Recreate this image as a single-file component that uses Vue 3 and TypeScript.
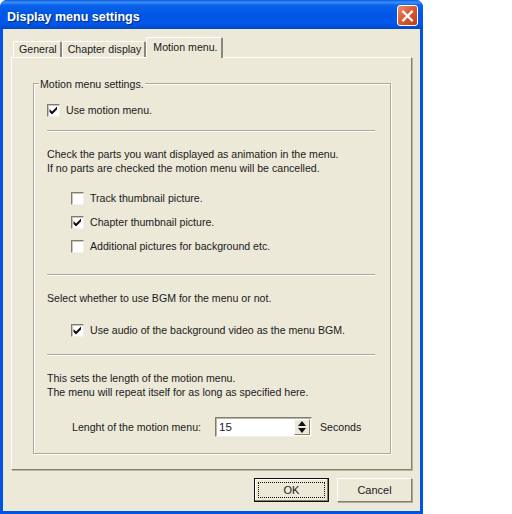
<template>
  <div class="window">
    <div class="title-bar">
      <span class="title">Display menu settings</span>
      <button class="close-btn" aria-label="Close">
        <svg viewBox="0 0 20 20" width="20" height="20">
          <path d="M5.5 5.5 L14.5 14.5 M14.5 5.5 L5.5 14.5" stroke="#fff" stroke-width="2.4" stroke-linecap="square" fill="none" />
        </svg>
      </button>
    </div>

    <div class="client">
      <div class="tabs">
        <div v-for="tab in tabs" :key="tab" :class="['tab', { active: tab === activeTab }]">{{ tab }}</div>
      </div>

      <div class="panel">
        <div class="group">
          <span class="legend">Motion menu settings.</span>

          <label class="check first">
            <input v-model="useMotion" type="checkbox" />
            <span class="box"><svg v-if="useMotion" viewBox="0 0 11 11" width="11" height="11"><path d="M1.5 4 L4 6.5 L9 1.5 L9 4.5 L4 9.5 L1.5 7 Z" fill="#111" /></svg></span>
            Use motion menu.
          </label>
          <div class="sep sep-a"></div>

          <p class="text text-a">Check the parts you want displayed as animation in the menu.<br />If no parts are checked the motion menu will be cancelled.</p>

          <div class="parts">
            <label v-for="part in parts" :key="part.label" class="check">
              <input v-model="part.on" type="checkbox" />
              <span class="box"><svg v-if="part.on" viewBox="0 0 11 11" width="11" height="11"><path d="M1.5 4 L4 6.5 L9 1.5 L9 4.5 L4 9.5 L1.5 7 Z" fill="#111" /></svg></span>
              {{ part.label }}
            </label>
          </div>
          <div class="sep sep-b"></div>

          <p class="text text-b">Select whether to use BGM for the menu or not.</p>
          <label class="check audio">
            <input v-model="useAudio" type="checkbox" />
            <span class="box"><svg v-if="useAudio" viewBox="0 0 11 11" width="11" height="11"><path d="M1.5 4 L4 6.5 L9 1.5 L9 4.5 L4 9.5 L1.5 7 Z" fill="#111" /></svg></span>
            Use audio of the background video as the menu BGM.
          </label>
          <div class="sep sep-c"></div>

          <p class="text text-c">This sets the length of the motion menu.<br />The menu will repeat itself for as long as specified here.</p>

          <div class="length-row">
            <span class="length-label">Lenght of the motion menu:</span>
            <div class="spin">
              <input v-model="seconds" class="spin-input" type="text" />
              <div class="spin-btns">
                <span class="arrow up"></span>
                <span class="arrow down"></span>
              </div>
            </div>
            <span class="unit">Seconds</span>
          </div>
        </div>
      </div>

      <div class="footer">
        <button class="btn default"><span class="focus">OK</span></button>
        <button class="btn">Cancel</button>
      </div>
    </div>
  </div>
</template>

<script setup lang="ts">
import { reactive, ref } from 'vue';

const tabs = ['General', 'Chapter display', 'Motion menu.'];
const activeTab = ref('Motion menu.');

const useMotion = ref(true);
const useAudio = ref(true);
const seconds = ref('15');

const parts = reactive([
  { label: 'Track thumbnail picture.', on: false },
  { label: 'Chapter thumbnail picture.', on: true },
  { label: 'Additional pictures for background etc.', on: false },
]);
</script>

<style>
body {
  background: #fff;
}
</style>

<style scoped>
.window {
  box-sizing: border-box;
  width: 423px;
  height: 514px;
  display: flex;
  flex-direction: column;
  background: #0054e3;
  border-radius: 7px 7px 0 0;
  padding: 0 3px 3px;
  font-family: "Liberation Sans", Arial, sans-serif;
  font-size: 10.6px;
  color: #1a1a1a;
}

.title-bar {
  box-sizing: border-box;
  height: 29px;
  margin: 0 -3px;
  padding: 2px 5px 0 7px;
  display: flex;
  align-items: center;
  justify-content: space-between;
  border-radius: 7px 7px 0 0;
  background: linear-gradient(180deg, #0a5be0 0%, #3d8ff5 8%, #0a63ea 18%, #0055e5 50%, #0059ec 80%, #0048c8 100%);
}

.title {
  margin-top: 2px;
  color: #fff;
  font-size: 12.5px;
  font-weight: 700;
  text-shadow: 1px 1px 1px #0a2a80;
}

.close-btn {
  box-sizing: border-box;
  width: 21px;
  height: 21px;
  padding: 0;
  border: 1px solid #fff;
  border-radius: 3px;
  background: linear-gradient(135deg, #e9906f 0%, #dc5a35 45%, #c23a1a 100%);
  display: flex;
  align-items: center;
  justify-content: center;
}

.client {
  flex: 1;
  background: #ece9d8;
  padding: 8px 8px 0;
  display: flex;
  flex-direction: column;
}

.tabs {
  display: flex;
  align-items: flex-end;
  height: 20px;
  padding-left: 2px;
  position: relative;
  z-index: 1;
}

.tab {
  box-sizing: border-box;
  height: 16px;
  line-height: 15px;
  padding: 0 3px 0 5px;
  border-top: 1px solid #fff;
  border-left: 1px solid #fff;
  border-right: 2px solid #8a887c;
  border-radius: 2px 2px 0 0;
  white-space: nowrap;
}

.tab.active {
  height: 21px;
  line-height: 18px;
  margin-bottom: -1px;
  padding: 0 3px 0 6px;
  background: #ece9d8;
}

.panel {
  box-sizing: border-box;
  height: 413px;
  padding: 25px 20px 0 21px;
  border: 1px solid;
  border-color: #fff #84826f #84826f #fff;
  box-shadow: 1px 1px 0 #b8b5a3;
}

.group {
  box-sizing: border-box;
  position: relative;
  height: 371px;
  padding: 0 15px 0 13px;
  border: 1px solid #aca899;
  box-shadow: inset 1px 1px 0 #fff, 1px 1px 0 #fff;
}

.legend {
  position: absolute;
  top: -6px;
  left: 5px;
  padding: 0 1px;
  line-height: 13px;
  background: #ece9d8;
}

.check {
  display: flex;
  align-items: center;
  height: 16px;
  white-space: nowrap;
}

.check input {
  display: none;
}

.box {
  box-sizing: border-box;
  width: 13px;
  height: 13px;
  margin-right: 6px;
  flex: none;
  display: flex;
  align-items: center;
  justify-content: center;
  background: #fff;
  border: 1px solid;
  border-color: #7f7d70 #f2f0e6 #f2f0e6 #7f7d70;
  box-shadow: inset 1px 1px 0 #c9c6b6;
}

.first {
  margin-top: 18px;
}

.sep {
  height: 1px;
  background: #aca899;
  border-bottom: 1px solid #fff;
}

.sep-a {
  margin-top: 12px;
}

.text {
  margin: 0;
  line-height: 14px;
}

.text-a {
  margin-top: 15px;
}

.parts {
  display: flex;
  flex-direction: column;
  gap: 8px;
  margin-top: 15px;
  padding-left: 24px;
}

.sep-b {
  margin-top: 20px;
}

.text-b {
  margin-top: 15px;
}

.audio {
  margin-top: 17px;
  padding-left: 24px;
}

.sep-c {
  margin-top: 16px;
}

.text-c {
  margin-top: 15px;
}

.length-row {
  display: flex;
  align-items: center;
  margin-top: 18px;
  padding-left: 25px;
}

.length-label {
  width: 143px;
  white-space: nowrap;
}

.spin {
  box-sizing: border-box;
  width: 97px;
  height: 20px;
  display: flex;
  background: #fff;
  border: 1px solid;
  border-color: #7f7d70 #f2f0e6 #f2f0e6 #7f7d70;
  box-shadow: inset 1px 1px 0 #b9b6a6;
}

.spin-input {
  flex: 1;
  min-width: 0;
  border: 0;
  outline: 0;
  padding: 0 0 0 3px;
  background: transparent;
  font: inherit;
  font-size: 11.5px;
  color: #1a1a1a;
}

.spin-btns {
  box-sizing: border-box;
  width: 16px;
  margin: 1px 1px 1px 0;
  display: flex;
  flex-direction: column;
  align-items: center;
  justify-content: center;
  gap: 2px;
  background: #ece9d8;
  border: 1px solid;
  border-color: #fff #84826f #84826f #fff;
}

.arrow {
  width: 0;
  height: 0;
  border-left: 4px solid transparent;
  border-right: 4px solid transparent;
}

.arrow.up {
  border-bottom: 5px solid #111;
}

.arrow.down {
  border-top: 5px solid #111;
}

.unit {
  margin-left: 8px;
}

.footer {
  display: flex;
  justify-content: flex-end;
  gap: 8px;
  margin-top: 8px;
}

.btn {
  box-sizing: border-box;
  width: 75px;
  height: 24px;
  padding: 0;
  border: 1px solid;
  border-color: #fff #84826f #84826f #fff;
  box-shadow: 1px 1px 0 #aca899;
  background: #ece9d8;
  font: inherit;
  font-size: 11px;
  color: #1a1a1a;
}

.btn.default {
  border: 1px solid #111;
  box-shadow: inset -1px -1px 0 #84826f, inset 1px 1px 0 #fff;
  padding: 3px;
}

.focus {
  box-sizing: border-box;
  display: flex;
  align-items: center;
  justify-content: center;
  height: 100%;
  border: 1px dotted #111;
}
</style>
